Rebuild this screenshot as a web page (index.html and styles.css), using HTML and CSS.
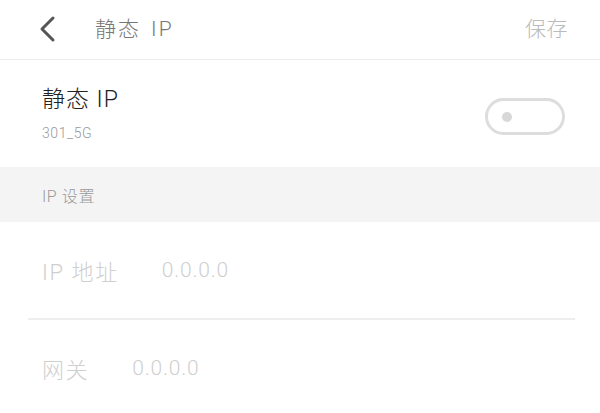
FILE: index.html
```html
<!DOCTYPE html>
<html lang="zh-CN">
<head>
  <meta charset="UTF-8" />
  <meta name="viewport" content="width=device-width, initial-scale=1.0"/>
  <title>静态 IP</title>
  <link rel="stylesheet" href="styles.css">
</head>
<body>
  <header class="topbar">
    <div class="topbar-left">
      <svg class="back" width="22" height="28" viewBox="0 0 22 28">
        <polyline points="16,3 5,14 16,25" fill="none" stroke="#555" stroke-width="3" stroke-linecap="round" stroke-linejoin="round"/>
      </svg>
      <span class="topbar-title">静态 IP</span>
    </div>
    <span class="save">保存</span>
  </header>

  <section class="switch-row">
    <div class="switch-text">
      <div class="switch-title">静态 IP</div>
      <div class="switch-sub">301_5G</div>
    </div>
    <div class="toggle"><span class="knob"></span></div>
  </section>

  <div class="group-head">IP 设置</div>

  <div class="field">
    <span class="field-label">IP 地址</span>
    <span class="field-value">0.0.0.0</span>
  </div>
  <div class="divider"></div>
  <div class="field">
    <span class="field-label">网关</span>
    <span class="field-value">0.0.0.0</span>
  </div>
</body>
</html>
```

FILE: styles.css
```css
:root {
  --line: #ececec;
  --muted: #bbb;
  --faint: #cfcfcf;
}

body {
  margin: 0;
  background: #fff;
  font-family: Roboto, "Noto Sans CJK SC", sans-serif;
  font-weight: 300;
  color: #222;
}

.topbar {
  height: 60px;
  box-sizing: border-box;
  border-bottom: 1px solid var(--line);
  display: flex;
  align-items: center;
  justify-content: space-between;
  padding: 0 32px 0 37px;
}

.topbar-left {
  display: flex;
  align-items: center;
}

.back {
  display: block;
  margin-top: -2px;
}

.topbar-title {
  margin-left: 36px;
  font-size: 21px;
  letter-spacing: 2px;
  word-spacing: 3px;
  color: #777;
  margin-top: -6px;
}

.save {
  font-size: 21px;
  letter-spacing: 0.5px;
  color: var(--muted);
  margin-top: -6px;
}

.switch-row {
  height: 107px;
  display: flex;
  align-items: center;
  justify-content: space-between;
  padding: 0 35px 0 42px;
}

.switch-text {
  margin-top: 0;
}

.switch-title {
  font-size: 23px;
  letter-spacing: 1px;
  line-height: 28px;
  color: #222;
}

.switch-sub {
  margin-top: 11px;
  font-size: 14px;
  letter-spacing: 0.6px;
  line-height: 16px;
  color: #999;
}

.toggle {
  width: 80px;
  height: 37px;
  box-sizing: border-box;
  border: 3px solid #ddd;
  border-radius: 19px;
  display: flex;
  align-items: center;
  padding-left: 14px;
  margin-top: 6px;
}

.knob {
  width: 10px;
  height: 10px;
  border-radius: 50%;
  background: #d8d8d8;
}

.group-head {
  height: 55px;
  background: #f4f4f4;
  display: flex;
  align-items: center;
  padding-left: 42px;
  font-size: 16px;
  letter-spacing: 0.6px;
  color: #999;
}

.field {
  height: 96px;
  display: flex;
  align-items: center;
  padding-left: 42px;
  gap: 43px;
}

.field-label {
  font-size: 22px;
  letter-spacing: 1.6px;
  color: var(--faint);
}

.field-value {
  font-size: 21px;
  letter-spacing: 0.8px;
  color: var(--faint);
}

.divider {
  height: 2px;
  background: #eee;
  margin: 0 25px 0 28px;
}
```
